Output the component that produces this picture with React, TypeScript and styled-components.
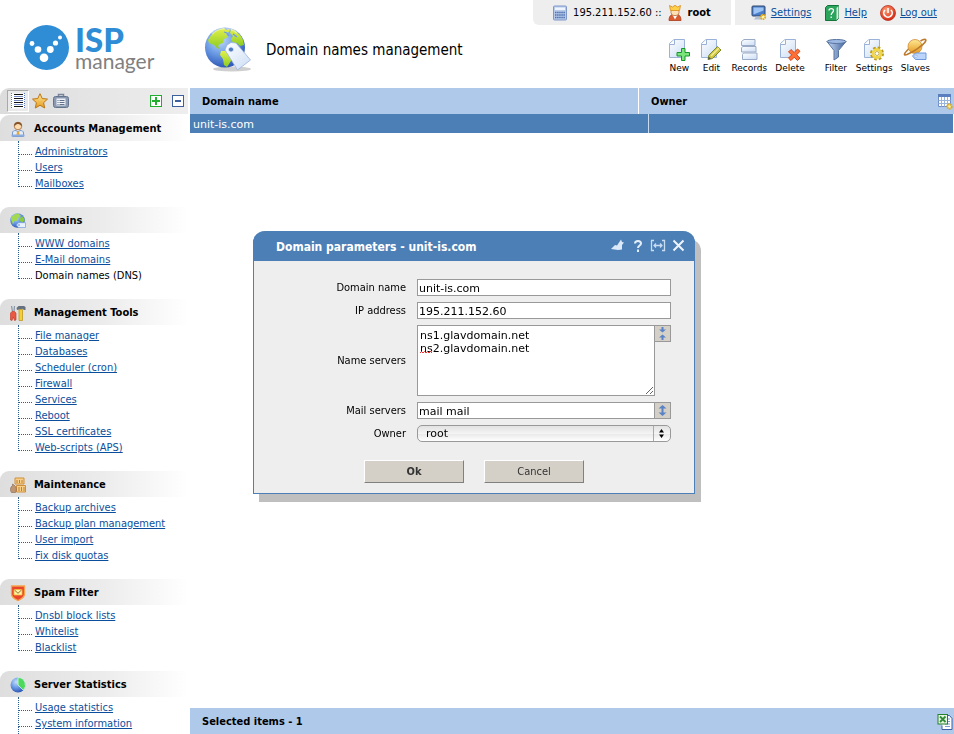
import React from "react";
import styled, { createGlobalStyle, css } from "styled-components";

const condensed = `"DejaVu Sans Condensed", "DejaVu Sans", Verdana, sans-serif`;
const wide = `"DejaVu Sans", Verdana, sans-serif`;
const blue = "#4c7fb6";
const paleBlue = "#afc9ea";
const linkBlue = "#0b4f9c";

const GlobalStyle = createGlobalStyle`
  * { box-sizing: border-box; }
  body { margin: 0; background: #fff; color: #000; font: 11px/16px ${condensed}; }
  button, input, textarea, select { font: inherit; color: inherit; margin: 0; }
  svg { display: block; flex: none; }
`;

const Page = styled.div`
  display: flex;
  flex-direction: column;
  height: 100vh;
  overflow: hidden;
`;

const Header = styled.header`
  display: flex;
  flex: none;
  height: 88px;
`;

const Brand = styled.a`
  display: flex;
  flex: none;
  width: 190px;
  padding: 25px 0 0 24px;
  gap: 6px;
  text-decoration: none;
`;

const BrandWords = styled.span`
  display: flex;
  flex-direction: column;
`;

const BrandTop = styled.span`
  font: 900 33px/28px Lato, sans-serif;
  color: #2f8dd6;
`;

const BrandBottom = styled.span`
  font: 400 21px/16px Lato, sans-serif;
  color: #808080;
`;

const PageTitle = styled.div`
  display: flex;
  flex: 1;
  align-items: center;
  gap: 12px;
  padding: 12px 0 0 14px;
  white-space: nowrap;
`;

const TitleText = styled.h1`
  margin: 0;
  font: 400 15px/20px ${condensed};
`;

const HeaderRight = styled.div`
  display: flex;
  flex-direction: column;
  align-items: flex-end;
`;

const StatusRow = styled.div`
  display: flex;
  gap: 4px;
`;

const StatusPanel = styled.div<{ $rounded?: boolean }>`
  display: flex;
  align-items: center;
  height: 25px;
  gap: 5px;
  padding: ${(p) => (p.$rounded ? "0 20px 0 19px" : "0 17px 0 16px")};
  background: #eee;
  border-bottom-left-radius: ${(p) => (p.$rounded ? "6px" : "0")};
`;

const PanelLink = styled.a`
  display: flex;
  align-items: center;
  gap: 4px;
  margin-right: 8px;
  color: ${linkBlue};
  text-decoration: underline;
  &:last-child { margin-right: 0; }
`;

const Toolbar = styled.nav`
  display: flex;
  gap: 8px;
  padding: 13px 24px 0 0;
`;

const ToolButton = styled.button<{ $apart?: boolean }>`
  display: flex;
  flex-direction: column;
  align-items: center;
  min-width: 24px;
  margin-left: ${(p) => (p.$apart ? "11px" : "0")};
  padding: 0;
  border: 0;
  background: none;
  font: 9px/12px ${wide};
`;

const Columns = styled.div`
  display: flex;
  flex: 1;
  min-height: 0;
`;

const Sidebar = styled.aside`
  flex: none;
  width: 190px;
  padding-right: 2px;
  overflow: hidden;
`;

const SideTools = styled.div`
  display: flex;
  align-items: center;
  justify-content: space-between;
  height: 26px;
  margin-bottom: 1px;
  padding: 0 4px 0 7px;
  border-top-left-radius: 9px;
  background: linear-gradient(90deg, #dcdcdc, #eee);
`;

const ToolSet = styled.div<{ $gap: number }>`
  display: flex;
  align-items: center;
  gap: ${(p) => p.$gap}px;
`;

const IconButton = styled.button<{ $pressed?: boolean }>`
  display: flex;
  align-items: center;
  justify-content: center;
  padding: 0;
  border: 0;
  background: none;
  ${(p) =>
    p.$pressed &&
    css`
      width: 22px;
      height: 22px;
      margin-right: -2px;
      border: 1px solid;
      border-color: #a9a9a9 #fff #fff #a9a9a9;
      background: #e9e9e9;
    `}
`;

const GroupTitle = styled.h2`
  display: flex;
  align-items: center;
  gap: 8px;
  height: 26px;
  margin: 0;
  padding: 2px 0 0 10px;
  border-top-left-radius: 9px;
  background: linear-gradient(90deg, #dedede, #ececec 55%, #fff);
  font: 700 11px/16px ${condensed};
  white-space: nowrap;
`;

const Tree = styled.ul<{ $open?: boolean }>`
  margin: 0;
  padding: 3px 0 15px 18px;
  list-style: none;
  ${(p) =>
    p.$open &&
    css`
      &::after {
        content: "";
        display: block;
        height: 24px;
        margin-top: -6px;
        border-left: 1px dotted #2c5f94;
      }
    `}
`;

const TreeItem = styled.li`
  display: flex;
  height: 16px;
  white-space: nowrap;
  &::before {
    content: "";
    flex: none;
    width: 13px;
    height: 16px;
    margin: -6px 3px 0 0;
    border: 1px dotted #2c5f94;
    border-width: 0 0 1px 1px;
  }
  &:first-child::before {
    height: 13px;
    margin-top: -3px;
  }
`;

const TreeLink = styled.a`
  color: ${linkBlue};
  text-decoration: underline;
`;

const Content = styled.main`
  display: flex;
  flex: 1;
  flex-direction: column;
  min-width: 0;
`;

const ListTable = styled.table`
  display: block;
  flex: 1;
  text-align: left;
  thead, tbody { display: block; }
`;

const HeadRow = styled.tr`
  display: grid;
  grid-template-columns: 449fr 315fr;
  height: 26px;
  background: ${paleBlue};
`;

const HeadCell = styled.th`
  display: flex;
  align-items: center;
  justify-content: space-between;
  padding: 1px 1px 0 12px;
  font: 700 11px/16px ${condensed};
  &:first-child { border-right: 1px solid #fff; }
`;

const BodyRow = styled.tr`
  display: grid;
  grid-template-columns: 459fr 304fr;
  height: 19px;
  margin-right: 1px;
  background: ${blue};
  color: #fff;
`;

const BodyCell = styled.td`
  padding: 3px 3px 0;
  font-family: ${wide};
  &:first-child { border-right: 1px solid #c9dbee; }
`;

const Footer = styled.footer`
  display: flex;
  flex: none;
  align-items: center;
  justify-content: space-between;
  height: 26px;
  padding: 1px 1px 0 12px;
  background: ${paleBlue};
  font: 700 11px/16px ${condensed};
`;

const Overlay = styled.div`
  position: fixed;
  inset: 0;
  display: flex;
  align-items: center;
  justify-content: center;
  padding-bottom: 2px;
`;

const DialogShell = styled.div`
  width: 448px;
  max-width: 100%;
  padding: 0 6px 8px 0;
`;

const Dialog = styled.form`
  border: 1px solid ${blue};
  border-top: 0;
  border-radius: 12px 12px 0 0;
  background: #eee;
  box-shadow: 6px 8px 0 #bfbfbf;
`;

const DialogBar = styled.div`
  display: flex;
  align-items: center;
  gap: 6px;
  height: 30px;
  margin: 0 -1px;
  padding: 0 10px 0 23px;
  border-radius: 12px 12px 0 0;
  background: ${blue};
  color: #fff;
`;

const DialogTitle = styled.h2`
  flex: 1;
  margin: 0;
  padding-top: 2px;
  font: 700 12px/16px ${condensed};
`;

const Fields = styled.div`
  display: grid;
  grid-template-columns: 1fr 254px;
  gap: 6px 11px;
  align-items: center;
  padding: 18px 23px 18px 0;
`;

const Label = styled.label`
  padding-top: 1px;
  text-align: right;
`;

const fieldBox = css`
  width: 100%;
  border: 1px solid #999;
  border-radius: 0;
  background: #fff;
  font: 11px/13px ${wide};
  outline: none;
`;

const TextInput = styled.input`
  ${fieldBox}
  display: block;
  height: 17px;
  padding: 2px 1px 0;
`;

const FieldRow = styled.div`
  display: flex;
  align-items: flex-start;
  position: relative;
`;

const TextBox = styled.textarea`
  ${fieldBox}
  display: block;
  height: 71px;
  padding: 3px 2px;
`;

const Squiggle = styled.svg`
  position: absolute;
  left: 3px;
  top: 26px;
`;

const StepButton = styled.button`
  display: flex;
  flex: none;
  align-items: center;
  justify-content: center;
  width: 16px;
  height: 17px;
  padding: 0;
  border: 1px solid #999;
  border-left: 0;
  background: #d4d0c8;
`;

const SelectBox = styled.div`
  display: flex;
  align-items: center;
  position: relative;
  svg { position: absolute; right: 0; pointer-events: none; }
`;

const Select = styled.select`
  appearance: none;
  width: 100%;
  height: 17px;
  padding: 1px 20px 0 8px;
  border: 1px solid #999;
  border-radius: 5px;
  background: linear-gradient(#e2e2e2, #f4f4f4 50%, #eaeaea 55%, #fff);
  font: 11px/14px ${wide};
`;

const Actions = styled.div`
  display: flex;
  justify-content: center;
  gap: 20px;
  padding-bottom: 10px;
`;

const ActionButton = styled.button<{ $primary?: boolean }>`
  width: 100px;
  height: 23px;
  padding: 2px 0 0;
  border: 1px solid;
  border-color: #fff #808080 #808080 #fff;
  background: #d4d0c8;
  color: #333;
  font-weight: ${(p) => (p.$primary ? 700 : 400)};
`;

/* ---------- drawings ---------- */

const Logo = () => (
  <svg width="45" height="45" viewBox="0 0 45 45" aria-hidden="true">
    <circle cx="22.5" cy="22.5" r="22.5" fill="#2f8dd6" />
    <g fill="#fff">
      <circle cx="8" cy="18.5" r="2.4" />
      <circle cx="14" cy="24.5" r="3.3" />
      <circle cx="20" cy="32.7" r="4.3" />
      <circle cx="26.3" cy="24.5" r="3.4" />
      <circle cx="31.5" cy="18" r="2.6" />
      <circle cx="36" cy="12.5" r="2" />
    </g>
  </svg>
);

const Gradients = () => (
  <svg width="0" height="0" aria-hidden="true">
    <defs>
      <radialGradient id="sea" cx=".38" cy=".3" r=".75">
        <stop offset="0" stopColor="#c4dcfa" />
        <stop offset=".5" stopColor="#6a9ae4" />
        <stop offset="1" stopColor="#2750b0" />
      </radialGradient>
      <linearGradient id="paper" x2=".8" y2="1">
        <stop offset="0" stopColor="#fff" />
        <stop offset="1" stopColor="#cfe0f6" />
      </linearGradient>
      <linearGradient id="gold" x2="0" y2="1">
        <stop offset="0" stopColor="#ffe895" />
        <stop offset="1" stopColor="#e49a1f" />
      </linearGradient>
      <linearGradient id="land" x2="0" y2="1">
        <stop offset="0" stopColor="#e4f04c" />
        <stop offset="1" stopColor="#8acb22" />
      </linearGradient>
      <linearGradient id="steel" x2="1" y2="0">
        <stop offset="0" stopColor="#c9dcf5" />
        <stop offset="1" stopColor="#3c5f9c" />
      </linearGradient>
      <radialGradient id="glowRed" cx=".4" cy=".3" r=".7">
        <stop offset="0" stopColor="#ff9c72" />
        <stop offset="1" stopColor="#d62a15" />
      </radialGradient>
    </defs>
  </svg>
);

const GlobeTag = () => (
  <svg width="50" height="48" viewBox="0 0 50 48" aria-hidden="true">
    <ellipse cx="28" cy="43" rx="19" ry="2.5" fill="#bbb" opacity=".7" />
    <circle cx="21" cy="21.500" r="20" fill="url(#sea)" />
    <path d="M6 11C9 6 14 3 20 2l2 2 3-1 1 2-4 3 2 3-4 2-1 4-3 1-2 2 2 3-3-1-3-3-5-2-1-3z" fill="url(#land)" />
    <path d="M27 3c6 2 10 6 12 11l1 5-4 1-3-3-4 0-2-4 2-3-3-3z" fill="url(#land)" />
    <path d="M17 25l5 0 6 4-1 6-4 6-3-2-1-6-3-4z" fill="url(#land)" />
    <path d="M20 6l3 1 2 3M29 8l4 3" stroke="#6a9ae4" strokeWidth="1.300" fill="none" />
    <path d="M8 8c5-6 18-8 25-1" stroke="#fff" strokeWidth="2" opacity=".4" fill="none" />
    <path d="M21 24l2-5 4-2.500 5 .5L46.500 34l-13 10z" fill="url(#paper)" stroke="#9db4dc" strokeWidth=".8" />
    <circle cx="27" cy="23.500" r="2.600" fill="#4f7ac0" stroke="#e5effc" />
  </svg>
);

const Sheet = () => (
  <>
    <path d="M2.500 5.500L7 1.500h10.500v18h-15z" fill="url(#paper)" stroke="#9ab2d8" />
    <path d="M2.500 6.500h5v-5" fill="#fff" stroke="#9ab2d8" />
  </>
);

const ToolArt: Record<string, React.ReactNode> = {
  New: (
    <>
      <Sheet />
      <path d="M14.500 10.500h3.500v4h4.500V18H18v4.500h-3.500V18H10v-3.500h4.500z" fill="#7be47b" stroke="#16952a" />
    </>
  ),
  Edit: (
    <>
      <Sheet />
      <path d="M10 17L18.500 8.500l3.500 3.500-8.500 8.500-4.500 1z" fill="#d0c53f" stroke="#7d8a2a" />
      <path d="M12 18l8-8" stroke="#f4ee9a" strokeWidth="1.500" />
      <path d="M9 21.500l.700-3 2.300 2.300z" fill="#555" />
    </>
  ),
  Records: (
    <g fill="url(#paper)" stroke="#9aabc8">
      <path d="M7 1.500h11v6H4.500V3.500z" />
      <path d="M5.500 8.500h13.500v5.500H4.500V10z" />
      <path d="M6.500 15h13.500v6.500H5.500V16.500z" />
    </g>
  ),
  Delete: (
    <>
      <Sheet />
      <path d="M10.500 14l2.500-2.500 3.200 3 3.300-3.500 2.500 2.300-3.300 3.500 3.300 3.300-2.500 2.400-3.300-3.200-3.200 3.200-2.500-2.400 3.300-3.300z" fill="#ff7038" stroke="#d44414" />
    </>
  ),
  Filter: (
    <>
      <path d="M3 3.500l7 9V22l4.500-3v-6.500l7.500-9z" fill="url(#steel)" stroke="#58749f" />
      <ellipse cx="12.500" cy="3.500" rx="9.500" ry="2" fill="#9db9e3" stroke="#58749f" />
    </>
  ),
  Settings: (
    <>
      <Sheet />
      <circle cx="15" cy="15.500" r="5.700" fill="none" stroke="#b99a1c" strokeWidth="2.600" strokeDasharray="2.500 1.977" />
      <circle cx="15" cy="15.500" r="4" fill="#fff" stroke="#f0d648" strokeWidth="2.800" />
      <circle cx="15" cy="15.500" r="2" fill="#fff" stroke="#b99a1c" strokeWidth=".8" />
    </>
  ),
  Slaves: (
    <>
      <circle cx="12" cy="8.500" r="7" fill="url(#gold)" stroke="#d08b35" strokeWidth=".8" />
      <path d="M5.500 11C1 15.500 0 18 4 16.500 10 14 20 7.500 22.500 3.500 24 .500 20.500 1 17.500 3" fill="none" stroke="#bd7a2d" strokeWidth="1.600" />
      <path d="M9.500 18l3-3H23v6.500H12.500z" fill="#bcd5fb" stroke="#6d99dc" />
      <circle cx="13" cy="18.200" r="1.200" fill="#fff" stroke="#6d99dc" strokeWidth=".6" />
    </>
  ),
};

const Small: React.FC<{ children: React.ReactNode }> = ({ children }) => (
  <svg width="16" height="16" viewBox="0 0 16 16" aria-hidden="true">
    {children}
  </svg>
);

const SmallArt: Record<string, React.ReactNode> = {
  calculator: (
    <>
      <rect x="1.500" y="1" width="13" height="14" rx="1" fill="#b7caea" stroke="#7f98c8" />
      <rect x="3" y="2.500" width="10" height="2.500" fill="#eef5ff" />
      <path d="M3 7.500h10M3 10h10M3 12.500h10" stroke="#4d6faf" strokeWidth="1.500" strokeDasharray="1.500 .6" />
    </>
  ),
  king: (
    <>
      <path d="M2 15.500c0-3.500 1.500-6 4-6l2 1.500 2-1.500c2.500 0 4 2.500 4 6z" fill="#dc5b2c" stroke="#a9391a" strokeWidth=".8" />
      <path d="M5.500 10L8 14.500 10.500 10z" fill="#fff" />
      <rect x="4" y="3.500" width="8" height="7" rx="3" fill="#ffe0b4" stroke="#b86a33" strokeWidth=".8" />
      <path d="M2.500 .5L5.500 2 8 .3 10.500 2l3-1.500-1 5h-9z" fill="#ffcf48" stroke="#d98b1a" strokeWidth=".8" />
    </>
  ),
  monitor: (
    <>
      <rect x="1" y="1" width="13" height="10" rx="1" fill="#4a7cc8" stroke="#31486e" />
      <path d="M2.500 2.500h10v3l-10 4z" fill="#9cc4f4" />
      <path d="M3 14.500h8l-1-3H5z" fill="#b4c0d2" />
      <circle cx="12" cy="12" r="2.200" fill="#fff3a0" stroke="#d9a92c" strokeWidth="1.800" strokeDasharray="1.400 .6" />
    </>
  ),
  help: (
    <>
      <path d="M1.500 2.500l2-2h11v13l-2 2h-11z" fill="#2ba45c" stroke="#14733b" />
      <path d="M12.500 3v12l2-2V1z" fill="#d5eedd" />
      <path d="M5 5.500C5 3 9.500 3 9.500 5.500 9.500 7.500 7.200 7.500 7.200 10M7.200 11.500v1.500" stroke="#fff" strokeWidth="1.300" fill="none" />
    </>
  ),
  power: (
    <>
      <circle cx="8" cy="8" r="7.500" fill="url(#glowRed)" stroke="#b53220" strokeWidth=".8" />
      <path d="M5 5a4.200 4.200 0 1 0 6 0M8 3v5" stroke="#fff" strokeWidth="1.600" fill="none" />
    </>
  ),
  list: (
    <>
      <path d="M1 .5h14v15H1z" fill="#fff" />
      <path d="M4 1.500h9M4 5.500h9M4 9.500h9M4 13.500h9" stroke="#111" />
      <path d="M4 3.500h9M4 7.500h9M4 11.500h9" stroke="#7189c0" />
      <path d="M1.500 0v16M14.500 0v16" stroke="#5976b8" strokeDasharray="1 1" />
    </>
  ),
  star: <path d="M8 .7l2.200 4.800 5.300.6-3.900 3.600 1.100 5.300L8 12.300 3.300 15l1.100-5.300L.5 6.100l5.300-.6z" fill="url(#gold)" stroke="#bd7714" />,
  briefcase: (
    <>
      <path d="M5.500 4V1.500h5V4" fill="none" stroke="#76859b" strokeWidth="1.500" />
      <rect x=".5" y="3.500" width="15" height="11" rx="2" fill="#8c9ab1" stroke="#65748d" />
      <path d="M3.500 5.500h9v7h-9z" fill="#eef2f8" />
      <path d="M4.500 7.500h1M6.500 7.500h5M4.500 9.500h1M6.500 9.500h5M4.500 11.500h1M6.500 11.500h5" stroke="#62728c" />
    </>
  ),
  user: (
    <>
      <circle cx="8" cy="5" r="3.800" fill="#ffdcae" stroke="#90582b" strokeWidth=".7" />
      <path d="M4 5c0-5.500 8-5.500 8 0-2-.5-2-2-4-2s-2 1.500-4 2z" fill="#85542d" />
      <path d="M2.500 15.500V12c0-2 1.500-2.500 3.500-2.500l2 1.500 2-1.500c2 0 3.500.5 3.500 2.500v3.500z" fill="#e2edfb" stroke="#7798ca" />
      <path d="M7 10.500h2L9.500 14h-3z" fill="#f2a92d" />
      <path d="M1.500 13.500h13v2h-13z" fill="#8cade0" />
    </>
  ),
  globe: (
    <>
      <circle cx="7.500" cy="7.500" r="7.300" fill="url(#sea)" />
      <path d="M1 5.500C2 2.500 5 .5 8 .5L11 3 8 5 6.500 8 4.500 8 3 11.500z" fill="#a3d94e" />
      <path d="M10 5l3-1.500 1.800 4-2.300 2-2.500-1.500z" fill="#8acb3c" />
      <path d="M6.500 12l2-2.300h7v4.800h-7z" fill="#e8f2ff" stroke="#84a9dc" strokeWidth=".8" />
      <circle cx="9" cy="12" r=".8" fill="#5884c4" />
    </>
  ),
  tools: (
    <>
      <path d="M6.500 3l2-2H14l1.500 1v3H14L12.500 3.800 7 5z" fill="#66717f" />
      <path d="M9 4.500h3.500v11H9z" fill="#f3d035" stroke="#b98f16" strokeWidth=".7" />
      <path d="M1.500 1l1 5.500M4.500 1L4 6.500" stroke="#8d99a8" strokeWidth="1.300" />
      <path d="M.5 8L2 6.500h2.500L6 8v7l-1.500.5L3.300 12l-1.300 3.500L.5 15z" fill="#eb5a40" stroke="#b93527" strokeWidth=".6" />
    </>
  ),
  crates: (
    <>
      <path d="M5 1h9v6H5zM6.500 8.500h9V15h-9z" fill="#f8cf88" stroke="#d08f3a" />
      <path d="M7 3v3M9.500 3v3M12 3v3M9 10v4M11.500 10v4M14 10v4" stroke="#c07e30" />
      <path d="M2.500 7l1.500 1c2.500 1.500 3 5 1.500 7.500H1.500C-.5 13 .5 10 2.500 8.500z" fill="#bd9676" stroke="#87664b" strokeWidth=".6" />
    </>
  ),
  shield: (
    <>
      <path d="M1.500 1h13v8c0 3.500-3 5-6.500 6.500C4.500 14 1.500 12.500 1.500 9z" fill="#e9432c" stroke="#f4a34a" strokeWidth="1.300" />
      <path d="M4 4.500h8V10H4z" fill="#fff3a8" stroke="#f2bd33" strokeWidth=".8" />
      <path d="M4.500 5L8 8.300 11.500 5" stroke="#92712a" fill="none" />
    </>
  ),
  pie: (
    <>
      <circle cx="8" cy="8" r="7.500" fill="url(#sea)" />
      <path d="M8 8V.5A7.500 7.500 0 0 1 13.300 13.300z" fill="#4fd95c" stroke="#e9f8ff" strokeWidth=".7" />
    </>
  ),
  grid: (
    <>
      <path d="M1.500 .5h12v12h-12z" fill="#fff" stroke="#6d8fc6" />
      <path d="M1 0h13v3H1z" fill="#597fbe" />
      <path d="M4.500 3v9.500M7.500 3v9.500M10.500 3v9.500M1.500 6.500h12M1.500 9.500h12" stroke="#9ab5dd" />
      <circle cx="12.500" cy="12.500" r="2.200" fill="#fff3a0" stroke="#d9a92c" strokeWidth="2" strokeDasharray="1.500 .5" />
    </>
  ),
  excel: (
    <>
      <path d="M7 1.500h5.500l2.500 3v11H5v-4" fill="#fff" stroke="#3c5fa8" />
      <path d="M8 10h5M8 12.500h5M11 5h2M11 7.500h2" stroke="#7d9bd2" />
      <rect x="1" y=".5" width="9.500" height="9.500" fill="#e9f5e4" stroke="#23802b" />
      <path d="M3 2.500l5.500 5.500M8.500 2.500L3 8" stroke="#2f8b35" strokeWidth="1.800" />
    </>
  ),
};

const PlusBox = ({ color, plus }: { color: string; plus?: boolean }) => (
  <svg width="12" height="12" viewBox="0 0 12 12" aria-hidden="true">
    <rect x=".5" y=".5" width="11" height="11" fill="#fff" stroke={color} />
    <path d={plus ? "M2 6h8M6 2v8" : "M3 6h6"} stroke={color} strokeWidth="2" />
  </svg>
);

const barArt: [string, number, React.ReactNode][] = [
  ["Pin", 14, <path key="p" d="M1 10l4-4 2 .5L10 2l1-1.500L12 3l2 .5L12 6v4.500L8 11z" fill="#dce9f8" />],
  ["Help", 14, <path key="h" d="M5 4.500C5 1 11 1 11 4.500 11 6.500 8 6.500 8 9M8 10.500v2.500" fill="none" stroke="#e4eefa" strokeWidth="2" />],
  ["Resize", 16, <path key="r" d="M4 1.500H1.500v10H4M12 1.500h2.500v10H12M4 6.500h8M6 4.500l-2 2 2 2M10 4.500l2 2-2 2" fill="none" stroke="#c8dcf3" strokeWidth="1.300" />],
  ["Close", 13, <path key="c" d="M1.500 1.500l10 10M11.500 1.500l-10 10" stroke="#edf4fc" strokeWidth="2" />],
];

/* ---------- data ---------- */

const groups: { title: string; icon: string; items: string[]; open?: boolean }[] = [
  { title: "Accounts Management", icon: "user", items: ["Administrators", "Users", "Mailboxes"] },
  { title: "Domains", icon: "globe", items: ["WWW domains", "E-Mail domains", "Domain names (DNS)"] },
  {
    title: "Management Tools",
    icon: "tools",
    items: ["File manager", "Databases", "Scheduler (cron)", "Firewall", "Services", "Reboot", "SSL certificates", "Web-scripts (APS)"],
  },
  { title: "Maintenance", icon: "crates", items: ["Backup archives", "Backup plan management", "User import", "Fix disk quotas"] },
  { title: "Spam Filter", icon: "shield", items: ["Dnsbl block lists", "Whitelist", "Blacklist"] },
  { title: "Server Statistics", icon: "pie", items: ["Usage statistics", "System information"], open: true },
];

const currentPage = "Domain names (DNS)";
const tools = ["New", "Edit", "Records", "Delete", "Filter", "Settings", "Slaves"];

export default function App() {
  return (
    <Page>
      <GlobalStyle />
      <Gradients />
      <Header>
        <Brand href="#" aria-label="ISP manager">
          <Logo />
          <BrandWords>
            <BrandTop>ISP</BrandTop>
            <BrandBottom>manager</BrandBottom>
          </BrandWords>
        </Brand>
        <PageTitle>
          <GlobeTag />
          <TitleText>Domain names management</TitleText>
        </PageTitle>
        <HeaderRight>
          <StatusRow>
            <StatusPanel $rounded>
              <Small>{SmallArt.calculator}</Small>
              <span>195.211.152.60 ::</span>
              <Small>{SmallArt.king}</Small>
              <strong>root</strong>
            </StatusPanel>
            <StatusPanel>
              <PanelLink href="#"><Small>{SmallArt.monitor}</Small>Settings</PanelLink>
              <PanelLink href="#"><Small>{SmallArt.help}</Small>Help</PanelLink>
              <PanelLink href="#"><Small>{SmallArt.power}</Small>Log out</PanelLink>
            </StatusPanel>
          </StatusRow>
          <Toolbar>
            {tools.map((name) => (
              <ToolButton key={name} type="button" $apart={name === "Filter"}>
                <svg width="24" height="24" viewBox="0 0 24 24" aria-hidden="true">{ToolArt[name]}</svg>
                {name}
              </ToolButton>
            ))}
          </Toolbar>
        </HeaderRight>
      </Header>
      <Columns>
        <Sidebar>
          <SideTools>
            <ToolSet $gap={5}>
              <IconButton type="button" $pressed aria-label="Menu"><Small>{SmallArt.list}</Small></IconButton>
              <IconButton type="button" aria-label="Favorites"><Small>{SmallArt.star}</Small></IconButton>
              <IconButton type="button" aria-label="Tasks"><Small>{SmallArt.briefcase}</Small></IconButton>
            </ToolSet>
            <ToolSet $gap={10}>
              <IconButton type="button" aria-label="Expand all"><PlusBox color="#1fae2d" plus /></IconButton>
              <IconButton type="button" aria-label="Collapse all"><PlusBox color="#3b5f9f" /></IconButton>
            </ToolSet>
          </SideTools>
          {groups.map((g) => (
            <section key={g.title}>
              <GroupTitle><Small>{SmallArt[g.icon]}</Small>{g.title}</GroupTitle>
              <Tree $open={g.open}>
                {g.items.map((item) => (
                  <TreeItem key={item}>
                    {item === currentPage ? item : <TreeLink href="#">{item}</TreeLink>}
                  </TreeItem>
                ))}
              </Tree>
            </section>
          ))}
        </Sidebar>
        <Content>
          <ListTable>
            <thead>
              <HeadRow>
                <HeadCell>Domain name</HeadCell>
                <HeadCell>Owner<Small>{SmallArt.grid}</Small></HeadCell>
              </HeadRow>
            </thead>
            <tbody>
              <BodyRow>
                <BodyCell>unit-is.com</BodyCell>
                <BodyCell />
              </BodyRow>
            </tbody>
          </ListTable>
          <Footer>Selected items - 1<Small>{SmallArt.excel}</Small></Footer>
        </Content>
      </Columns>
      <Overlay>
        <DialogShell role="dialog" aria-labelledby="dialog-title">
          <Dialog onSubmit={(e) => e.preventDefault()}>
            <DialogBar>
              <DialogTitle id="dialog-title">Domain parameters - unit-is.com</DialogTitle>
              {barArt.map(([name, width, art]) => (
                <IconButton key={name} type="button" aria-label={name}>
                  <svg width={width} height="13" viewBox={`0 0 ${width} 13`} aria-hidden="true">{art}</svg>
                </IconButton>
              ))}
            </DialogBar>
            <Fields>
              <Label htmlFor="domain">Domain name</Label>
              <TextInput id="domain" defaultValue="unit-is.com" />
              <Label htmlFor="ip">IP address</Label>
              <TextInput id="ip" defaultValue="195.211.152.60" />
              <Label htmlFor="ns">Name servers</Label>
              <FieldRow>
                <TextBox id="ns" spellCheck={false} defaultValue={"ns1.glavdomain.net\nns2.glavdomain.net"} />
                <Squiggle width="12" height="3" viewBox="0 0 12 3" aria-hidden="true">
                  <path d="M0 2l1.500-1.500L3 2l1.500-1.500L6 2l1.500-1.500L9 2l1.500-1.500L12 2" fill="none" stroke="#e33" />
                </Squiggle>
                <StepButton type="button" aria-label="Collapse name servers">
                  <svg width="9" height="13" viewBox="0 0 9 13" aria-hidden="true">
                    <path d="M3.500 0h2v2.500H8l-3.500 3L1 2.500h2.500zM3.500 13h2v-2.500H8l-3.500-3-3.500 3h2.500z" fill="#5a82c6" />
                  </svg>
                </StepButton>
              </FieldRow>
              <Label htmlFor="mail">Mail servers</Label>
              <FieldRow>
                <TextInput id="mail" defaultValue="mail mail" />
                <StepButton type="button" aria-label="Expand mail servers">
                  <svg width="9" height="13" viewBox="0 0 9 13" aria-hidden="true">
                    <path d="M4.500 1L8.500 4.500h-3v4h3L4.500 12 .5 8.500h3v-4h-3z" fill="#5a82c6" />
                  </svg>
                </StepButton>
              </FieldRow>
              <Label htmlFor="owner">Owner</Label>
              <SelectBox>
                <Select id="owner" defaultValue="root"><option>root</option></Select>
                <svg width="18" height="17" viewBox="0 0 18 17" aria-hidden="true">
                  <path d="M.5 1v15" stroke="#aaa" />
                  <path d="M8.500 4L11 7.500H6zM8.500 13L11 9.500H6z" fill="#000" />
                </svg>
              </SelectBox>
            </Fields>
            <Actions>
              <ActionButton type="submit" $primary>Ok</ActionButton>
              <ActionButton type="button">Cancel</ActionButton>
            </Actions>
          </Dialog>
        </DialogShell>
      </Overlay>
    </Page>
  );
}
